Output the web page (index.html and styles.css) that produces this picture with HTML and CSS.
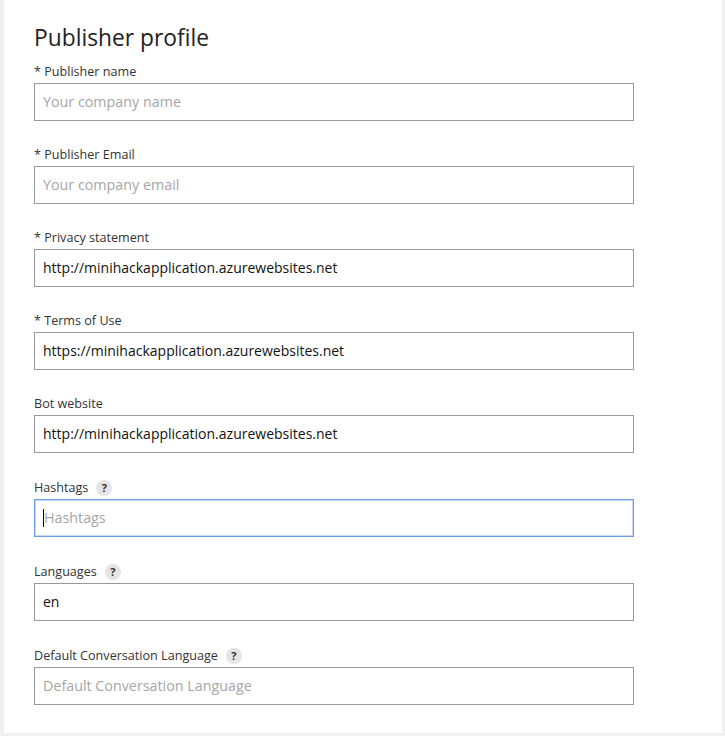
FILE: index.html
```html
<!DOCTYPE html>
<html>
<head>
<meta charset="utf-8">
<link rel="stylesheet" href="styles.css">
</head>
<body>
<div class="panel">
  <h1 class="title">Publisher profile</h1>
  <div class="field">
    <label class="label">* Publisher name</label>
    <div class="input placeholder">Your company name</div>
  </div>
  <div class="field">
    <label class="label">* Publisher Email</label>
    <div class="input placeholder">Your company email</div>
  </div>
  <div class="field">
    <label class="label">* Privacy statement</label>
    <div class="input">http://minihackapplication.azurewebsites.net</div>
  </div>
  <div class="field">
    <label class="label">* Terms of Use</label>
    <div class="input">https://minihackapplication.azurewebsites.net</div>
  </div>
  <div class="field">
    <label class="label">Bot website</label>
    <div class="input">http://minihackapplication.azurewebsites.net</div>
  </div>
  <div class="field">
    <label class="label has-help">Hashtags <span class="help">?</span></label>
    <div class="input placeholder focus"><span class="caret"></span>Hashtags</div>
  </div>
  <div class="field">
    <label class="label has-help">Languages <span class="help">?</span></label>
    <div class="input">en</div>
  </div>
  <div class="field">
    <label class="label has-help">Default Conversation Language <span class="help">?</span></label>
    <div class="input placeholder">Default Conversation Language</div>
  </div>
</div>
</body>
</html>
```

FILE: styles.css
```css
html, body {
  margin: 0;
  padding: 0;
  background: #f0f0f2;
}
body {
  width: 725px;
  height: 736px;
  overflow: hidden;
  font-family: "Segoe UI", "Open Sans", "Noto Sans", sans-serif;
  color: #222;
}
.panel {
  margin-left: 4px;
  width: 718px;
  height: 733px;
  background: #fff;
  box-sizing: border-box;
  padding: 21px 0 0 30px;
}
.title {
  margin: 0 0 7px 0;
  font-size: 22.8px;
  font-weight: 400;
  line-height: 34px;
  color: #222;
}
.field {
  padding-top: 1px;
  margin-bottom: 24px;
}
.label {
  display: flex;
  align-items: center;
  gap: 8px;
  font-size: 12.6px;
  line-height: 18px;
  height: 18px;
  margin-bottom: 2px;
  color: #333;
}
.label.has-help {
  height: 19px;
}
.help {
  display: inline-flex;
  align-items: center;
  justify-content: center;
  width: 16px;
  height: 16px;
  border-radius: 50%;
  background: #e4e4e4;
  font-size: 11px;
  font-weight: 700;
  color: #333;
}
.input {
  width: 600px;
  height: 38px;
  box-sizing: border-box;
  border: 1px solid #999;
  padding: 0 8px;
  font-size: 14px;
  line-height: 36px;
  color: #111;
  display: flex;
  align-items: center;
}
.placeholder {
  color: #a6a6a6;
  font-size: 14.3px;
}
.focus {
  border-color: #6f9be6;
  box-shadow: inset 0 0 0 1px #c7d8f5;
}
.caret {
  display: inline-block;
  width: 1px;
  height: 18px;
  background: #000;
}
```
